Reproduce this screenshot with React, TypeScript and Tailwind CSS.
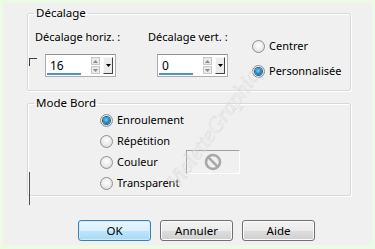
import React from "react";

const font = { fontFamily: '"Noto Sans", "Open Sans", sans-serif' };

function Radio({ checked }: { checked?: boolean }) {
  return (
    <span className="relative inline-flex h-[13px] w-[13px] shrink-0 items-center justify-center rounded-full border border-[#8f8f8f] bg-[radial-gradient(circle_at_50%_40%,#ffffff_0%,#e8e8e8_60%,#cfcfcf_100%)]">
      {checked && (
        <span className="h-[7px] w-[7px] rounded-full bg-[radial-gradient(circle_at_45%_40%,#7fd0f5_0%,#2c8fc4_45%,#0c4f7c_100%)] shadow-[0_0_0_1px_#1b5f8a]" />
      )}
    </span>
  );
}

function Spinner({ value }: { value: string }) {
  return (
    <div className="relative flex h-[23px] w-[71px] items-center border border-[#abadb3] border-t-[#8e9297] bg-white">
      <span className="ml-[4px] text-[12px] leading-none text-black">{value}</span>
      <div className="absolute bottom-[1px] left-[1px] h-[2px] w-[34px] bg-[#4d94c9]" />
      <div className="absolute left-[45px] top-[2px] flex h-[17px] w-[9px] flex-col gap-[1px]">
        <div className="flex h-[8px] items-center justify-center border border-[#c8c8c8] bg-[#eaeaea]">
          <svg width="5" height="3" viewBox="0 0 5 3"><path d="M0 3 L2.5 0 L5 3 Z" fill="#8a8a8a" /></svg>
        </div>
        <div className="flex h-[8px] items-center justify-center border border-[#c8c8c8] bg-[#eaeaea]">
          <svg width="5" height="3" viewBox="0 0 5 3"><path d="M0 0 L2.5 3 L5 0 Z" fill="#8a8a8a" /></svg>
        </div>
      </div>
      <div className="absolute left-[57px] top-[2px] flex h-[17px] w-[10px] items-center justify-center border border-[#f8f8f8] border-b-[#404040] border-r-[#404040] bg-[#ececec]">
        <svg width="5" height="3" viewBox="0 0 5 3"><path d="M0 0 L2.5 3 L5 0 Z" fill="#000" /></svg>
      </div>
    </div>
  );
}

function Button({ label, primary }: { label: string; primary?: boolean }) {
  return (
    <div
      className={
        "flex h-[21px] w-[73px] items-center justify-center rounded-[3px] border text-[11.5px] text-black " +
        (primary
          ? "border-[#3c7fb1] bg-[linear-gradient(#eaf6fd,#d9f0fc_50%,#bee6fd_51%,#a7d9f5)] shadow-[inset_0_0_0_1px_#cdeafa]"
          : "border-[#707070] bg-[linear-gradient(#f2f2f2,#ebebeb_50%,#dddddd_51%,#cfcfcf)] shadow-[inset_0_0_0_1px_#fbfbfb]")
      }
    >
      {label}
    </div>
  );
}

export default function App() {
  return (
    <div className="h-[249px] w-[375px] bg-[#ecfbe3] pl-[3px] pt-[3px]" style={font}>
      <div className="relative h-[242px] w-[369px] rounded-br-[6px] bg-[#f0f0f0] pl-[24px] pt-[2px] text-[11px] leading-[16px] text-black">
        {/* Décalage */}
        <fieldset className="w-[324px] rounded-[2px] border border-[#d5d8dc] pb-[11px] shadow-[inset_1px_1px_0_#ffffff,1px_1px_0_#ffffff]">
          <legend className="ml-[6px] px-[2px] text-[11.5px]">Décalage</legend>
          <div className="flex">
            <div className="flex w-[120px] flex-col">
              <div className="mt-[8px] pl-[7px]">Décalage horiz. :</div>
              <div className="mt-[9px] flex items-start">
                <div className="ml-[1px] mt-[4px] h-[8px] w-[8px] border-l border-t border-[#404040]" />
                <div className="ml-[8px]">
                  <Spinner value="16" />
                </div>
              </div>
            </div>
            <div className="flex w-[104px] flex-col">
              <div className="mt-[8px]">Décalage vert. :</div>
              <div className="ml-[9px] mt-[9px]">
                <Spinner value="0" />
              </div>
            </div>
            <div className="flex flex-col gap-[9px] pt-[17px]">
              <div className="flex h-[16px] items-center gap-[4px]">
                <Radio />
                <span>Centrer</span>
              </div>
              <div className="flex h-[16px] items-center gap-[4px]">
                <Radio checked />
                <span>Personnalisée</span>
              </div>
            </div>
          </div>
        </fieldset>

        {/* Mode Bord */}
        <fieldset className="mt-[4px] w-[324px] rounded-[2px] border border-[#d5d8dc] pb-[4px] shadow-[inset_1px_1px_0_#ffffff,1px_1px_0_#ffffff]">
          <legend className="ml-[6px] px-[2px] text-[11.5px]">Mode Bord</legend>
          <div className="mt-[1px] flex flex-col gap-[5px] pl-[72px]">
            <div className="flex h-[16px] items-center gap-[4px]">
              <Radio checked />
              <span>Enroulement</span>
            </div>
            <div className="flex h-[16px] items-center gap-[4px]">
              <Radio />
              <span>Répétition</span>
            </div>
            <div className="flex h-[16px] items-center">
              <div className="flex w-[86px] items-center gap-[4px]">
                <Radio />
                <span>Couleur</span>
              </div>
              <div className="-my-[4px] flex h-[24px] w-[54px] items-center justify-center border border-[#a0a0a0] border-b-white border-r-white">
                <svg width="18" height="18" viewBox="0 0 18 18">
                  <circle cx="9" cy="9" r="7" fill="none" stroke="#a8a8a8" strokeWidth="2.6" />
                  <line x1="4.2" y1="4.2" x2="13.8" y2="13.8" stroke="#a8a8a8" strokeWidth="2.6" />
                </svg>
              </div>
            </div>
            <div className="flex h-[16px] items-center gap-[4px]">
              <Radio />
              <span>Transparent</span>
            </div>
          </div>
        </fieldset>

        {/* Buttons */}
        <div className="mt-[24px] flex gap-[9px] pl-[51px]">
          <Button label="OK" primary />
          <Button label="Annuler" />
          <Button label="Aide" />
        </div>

        {/* stray vertical line */}
        <div className="absolute left-[26px] top-[169px] h-[33px] w-[1px] bg-[#505050]" />

        {/* watermark */}
        <div
          className="pointer-events-none absolute left-[125px] top-[115px] w-[170px] -rotate-[54deg] text-center text-[22px] italic leading-none text-transparent [-webkit-text-stroke:0.5px_#dcdcdc]"
          style={{ fontFamily: '"Liberation Serif", serif' }}
        >
          VioletteGraphic
        </div>
      </div>
    </div>
  );
}
